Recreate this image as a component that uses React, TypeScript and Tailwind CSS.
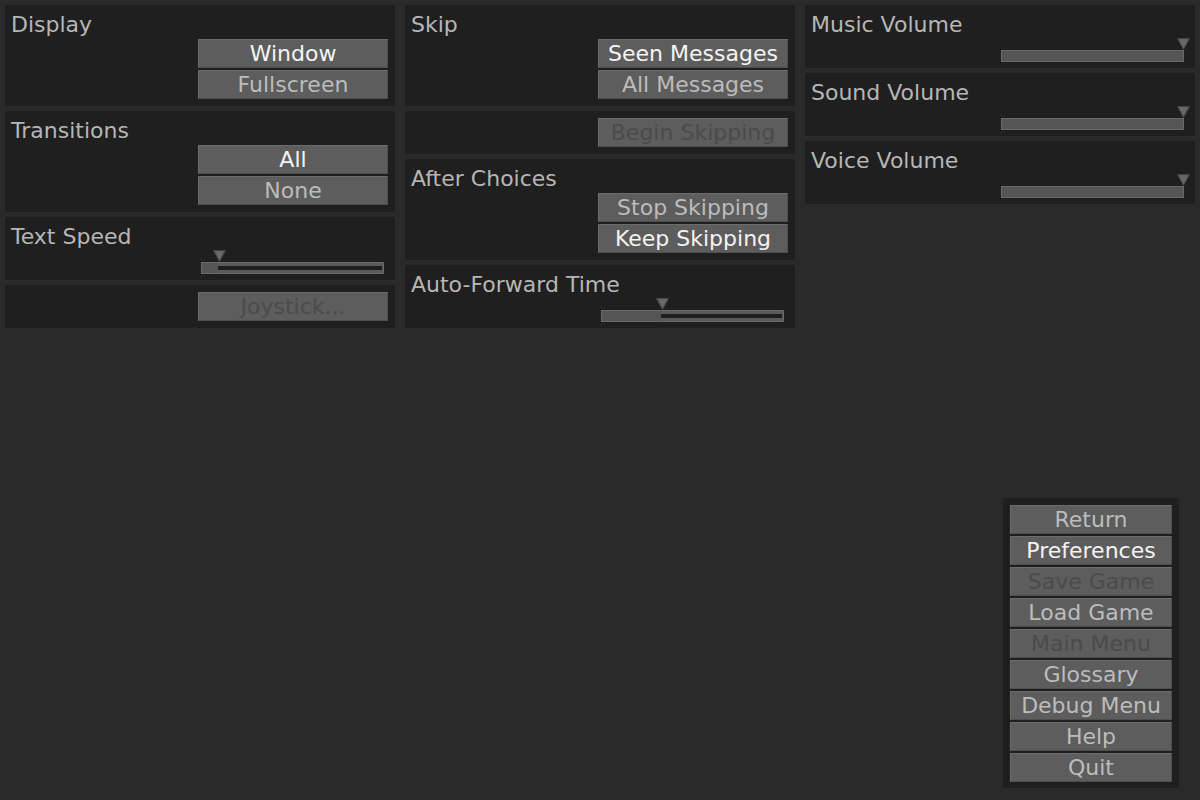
import type { ReactNode } from 'react';

type BtnState = 'selected' | 'idle' | 'disabled';

const font = { fontFamily: '"DejaVu Sans", "Liberation Sans", sans-serif' };

function Btn({ label, state = 'idle', wide = false }: { label: string; state?: BtnState; wide?: boolean }) {
  const color =
    state === 'selected' ? 'text-[#f4f4f4]' : state === 'disabled' ? 'text-[#4b4b4b]' : 'text-[#bcbcbc]';
  return (
    <div
      className={[
        'h-[29px] flex items-center justify-center bg-[#5d5d5d] border border-[#6c6c6c] border-b-[#4e4e4e] border-r-[#4e4e4e] text-[22px] leading-[26px] whitespace-nowrap',
        wide ? 'w-[162px]' : 'w-[190px]',
        color,
      ].join(' ')}
    >
      {label}
    </div>
  );
}

function Panel({ title, slider = false, children }: { title?: string; slider?: boolean; children: ReactNode }) {
  return (
    <div
      className={[
        'bg-[#1f1f1f] pt-[7px] pl-[6px] pr-[7px] flex flex-col',
        slider ? 'pb-[6px]' : 'pb-[7px]',
      ].join(' ')}
    >
      {title && (
        <div className={['h-[26px] text-[22px] leading-[26px] text-[#b6b6b6]', slider ? '' : 'mb-[1px]'].join(' ')}>
          {title}
        </div>
      )}
      {children}
    </div>
  );
}

function Buttons({ items }: { items: { label: string; state?: BtnState }[] }) {
  return (
    <div className="flex flex-col items-end gap-[2px]">
      {items.map((b) => (
        <Btn key={b.label} label={b.label} state={b.state} />
      ))}
    </div>
  );
}

/** Ren'Py style bar: gray fill on the left, hollow track on the right, triangle thumb above. */
function Slider({ value }: { value: number }) {
  const width = 183;
  const fill = Math.round(width * value);
  return (
    <div className="relative h-[24px] w-[183px] ml-[190px]">
      <svg
        className="absolute top-0"
        style={{ left: Math.min(fill - 6, width - 7) }}
        width="13"
        height="12"
        viewBox="0 0 13 12"
      >
        <polygon points="0.5,0.5 12.5,0.5 6.5,11.5" fill="#5f5f5f" stroke="#474747" strokeWidth="1" />
        <polygon points="2.5,1.5 10.5,1.5 6.5,9" fill="#6a6a6a" />
      </svg>
      <div className="absolute left-0 right-0 top-[12px] h-[12px] flex border border-[#6a6a6a] bg-[#555555]">
        <div style={{ width: Math.max(fill - 2, 0) }} className="h-full bg-[#555555]" />
        {value < 1 && (
          <div className="flex-1 h-full border-y-[3px] border-r border-[#5a5a5a] bg-[#1e1e1e]" />
        )}
      </div>
    </div>
  );
}

export default function App() {
  return (
    <div style={font} className="w-[1200px] h-[800px] bg-[#2a2a2a] flex flex-col overflow-hidden">
      <div className="flex gap-[10px] px-[5px] pt-[5px]">
        {/* ── Left column ── */}
        <div className="w-[390px] flex flex-col gap-[5px]">
          <Panel title="Display">
            <Buttons items={[{ label: 'Window', state: 'selected' }, { label: 'Fullscreen' }]} />
          </Panel>
          <Panel title="Transitions">
            <Buttons items={[{ label: 'All', state: 'selected' }, { label: 'None' }]} />
          </Panel>
          <Panel title="Text Speed" slider>
            <Slider value={0.1} />
          </Panel>
          <Panel>
            <Buttons items={[{ label: 'Joystick...', state: 'disabled' }]} />
          </Panel>
        </div>

        {/* ── Middle column ── */}
        <div className="w-[390px] flex flex-col gap-[5px]">
          <Panel title="Skip">
            <Buttons items={[{ label: 'Seen Messages', state: 'selected' }, { label: 'All Messages' }]} />
          </Panel>
          <Panel>
            <Buttons items={[{ label: 'Begin Skipping', state: 'disabled' }]} />
          </Panel>
          <Panel title="After Choices">
            <Buttons items={[{ label: 'Stop Skipping' }, { label: 'Keep Skipping', state: 'selected' }]} />
          </Panel>
          <Panel title="Auto-Forward Time" slider>
            <Slider value={0.333} />
          </Panel>
        </div>

        {/* ── Right column ── */}
        <div className="w-[390px] flex flex-col gap-[5px]">
          <Panel title="Music Volume" slider>
            <Slider value={1} />
          </Panel>
          <Panel title="Sound Volume" slider>
            <Slider value={1} />
          </Panel>
          <Panel title="Voice Volume" slider>
            <Slider value={1} />
          </Panel>
        </div>
      </div>

      {/* ── Game menu ── */}
      <div className="mt-auto self-end mr-[21px] mb-[12px] bg-[#1f1f1f] p-[7px] pb-[6px] flex flex-col gap-[2px]">
        <Btn wide label="Return" />
        <Btn wide label="Preferences" state="selected" />
        <Btn wide label="Save Game" state="disabled" />
        <Btn wide label="Load Game" />
        <Btn wide label="Main Menu" state="disabled" />
        <Btn wide label="Glossary" />
        <Btn wide label="Debug Menu" />
        <Btn wide label="Help" />
        <Btn wide label="Quit" />
      </div>
    </div>
  );
}
